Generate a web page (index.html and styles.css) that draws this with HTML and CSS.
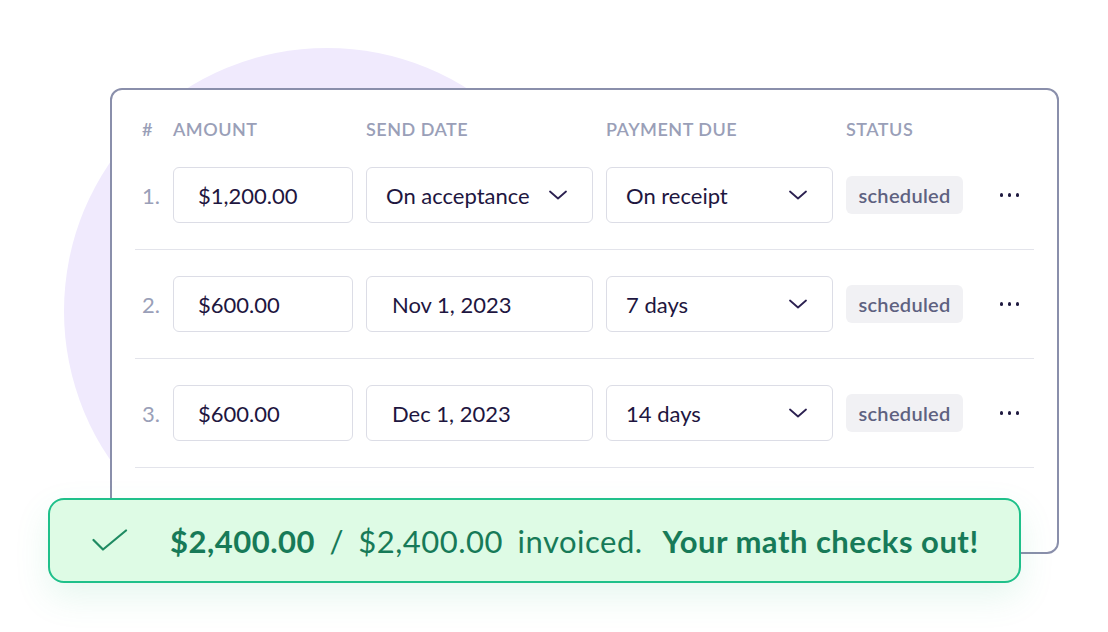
FILE: index.html
```html
<!DOCTYPE html>
<html lang="en">
<head>
<meta charset="utf-8">
<title>Payment schedule</title>
<link rel="stylesheet" href="styles.css">
</head>
<body>
<div class="stage">
  <div class="blob"></div>
  <div class="card">
    <div class="grid head">
      <div>#</div>
      <div>AMOUNT</div>
      <div>SEND DATE</div>
      <div>PAYMENT DUE</div>
      <div>STATUS</div>
      <div></div>
    </div>

    <div class="grid row">
      <div class="num">1.</div>
      <div class="field amount">$1,200.00</div>
      <div class="field select">On acceptance<svg class="chev" viewBox="0 0 18 10"><path d="M1 1.5 L9 8.5 L17 1.5"/></svg></div>
      <div class="field select">On receipt<svg class="chev" viewBox="0 0 18 10"><path d="M1 1.5 L9 8.5 L17 1.5"/></svg></div>
      <div class="badge">scheduled</div>
      <div class="dots"><span></span><span></span><span></span></div>
    </div>

    <div class="grid row">
      <div class="num">2.</div>
      <div class="field amount">$600.00</div>
      <div class="field date">Nov 1, 2023</div>
      <div class="field select">7 days<svg class="chev" viewBox="0 0 18 10"><path d="M1 1.5 L9 8.5 L17 1.5"/></svg></div>
      <div class="badge">scheduled</div>
      <div class="dots"><span></span><span></span><span></span></div>
    </div>

    <div class="grid row">
      <div class="num">3.</div>
      <div class="field amount">$600.00</div>
      <div class="field date">Dec 1, 2023</div>
      <div class="field select">14 days<svg class="chev" viewBox="0 0 18 10"><path d="M1 1.5 L9 8.5 L17 1.5"/></svg></div>
      <div class="badge">scheduled</div>
      <div class="dots"><span></span><span></span><span></span></div>
    </div>
  </div>

  <div class="banner">
    <svg class="check" viewBox="0 0 36 24"><path d="M1.5 11 L11 20.5 L34 1.5"/></svg>
    <p class="summary"><span class="tally"><strong>$2,400.00</strong> / $2,400.00 invoiced.</span><strong class="verdict">Your math checks out!</strong></p>
  </div>
</div>
</body>
</html>
```

FILE: styles.css
```css
* { box-sizing: border-box; }

html, body {
  margin: 0;
  padding: 0;
  background: #ffffff;
}

body {
  font-family: "Lato", "Open Sans", sans-serif;
  color: #1e1640;
}

.stage {
  position: relative;
  width: 1108px;
  height: 632px;
  overflow: hidden;
  padding: 88px 0 0 110px;
}

.blob {
  position: absolute;
  left: 64px;
  top: 48px;
  width: 526px;
  height: 526px;
  border-radius: 50%;
  background: #f0eafd;
}

.card {
  position: relative;
  width: 949px;
  height: 466px;
  background: #ffffff;
  border: 2px solid #8a8fab;
  border-radius: 12px;
  padding: 0 23px;
}

.grid {
  display: grid;
  grid-template-columns: 18px 180px 227px 227px 117px 1fr;
  column-gap: 13px;
  align-items: center;
  padding-left: 7px;
}

.head {
  padding-top: 26px;
  height: 51px;
  line-height: 24px;
  font-size: 18px;
  font-weight: 600;
  letter-spacing: 0.5px;
  color: #9a9fb8;
}

.row {
  padding-top: 26px;
  padding-bottom: 26px;
  border-bottom: 1px solid #e3e4eb;
}

.num {
  font-size: 22px;
  color: #9a9fb8;
}

.field {
  height: 56px;
  border: 1px solid #dcdde6;
  border-radius: 6px;
  background: #ffffff;
  display: flex;
  align-items: center;
  font-size: 22px;
  color: #1e1640;
  padding-left: 19px;
}

.field.amount { padding-left: 24px; }
.field.date { padding-left: 25px; }

.field.select {
  justify-content: space-between;
  padding-right: 25px;
}

.chev {
  width: 18px;
  height: 10px;
  fill: none;
  stroke: #2b2050;
  stroke-width: 1.8;
  stroke-linecap: round;
  stroke-linejoin: round;
}

.badge {
  height: 38px;
  border-radius: 6px;
  background: #f1f1f4;
  color: #5e6180;
  font-size: 20px;
  font-weight: 600;
  letter-spacing: 0.3px;
  display: flex;
  align-items: center;
  justify-content: center;
}

.dots {
  justify-self: end;
  margin-right: 15px;
  display: flex;
  gap: 4.5px;
}

.dots span {
  width: 3.5px;
  height: 3.5px;
  border-radius: 50%;
  background: #1f1a40;
}

.banner {
  position: absolute;
  left: 48px;
  top: 498px;
  width: 973px;
  height: 85px;
  border: 2px solid #1fc08a;
  border-radius: 16px;
  background: #defbe5;
  box-shadow: 0 14px 34px rgba(60, 190, 130, 0.13);
  display: flex;
  align-items: center;
  padding-left: 42px;
  color: #177a58;
}

.check {
  width: 36px;
  height: 24px;
  fill: none;
  stroke: #1f8a62;
  stroke-width: 2.2;
  stroke-linecap: round;
  stroke-linejoin: round;
  flex: none;
}

.summary {
  margin: 0 0 0 42px;
  font-size: 31px;
  line-height: 36px;
  white-space: pre;
}

.tally {
  letter-spacing: 0.5px;
  word-spacing: 6px;
}

.summary strong {
  font-weight: 700;
}

.verdict {
  margin-left: 20px;
  letter-spacing: 0.5px;
}
```
